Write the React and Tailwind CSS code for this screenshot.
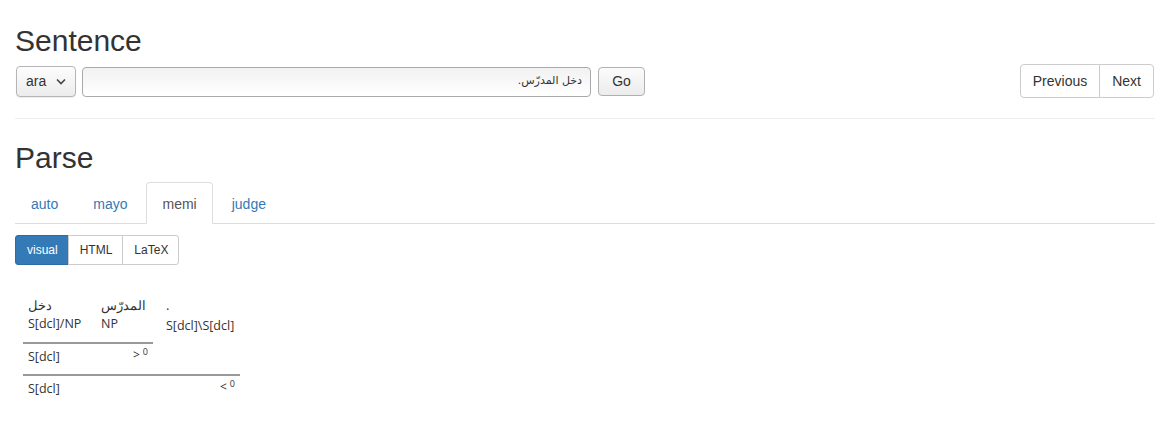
import React from 'react';

const sans = { fontFamily: '"Liberation Sans", Arial, sans-serif' };

const tabs = ['auto', 'mayo', 'memi', 'judge'];
const views = ['visual', 'HTML', 'LaTeX'];

const Derivation = () => (
  <div className="mt-[31px] ml-[8px] text-[12.5px] text-[#333]" style={{ fontFamily: '"Open Sans", "Noto Sans", sans-serif' }}>
    <div className="flex">
      <div className="w-[73px] pl-[5px]">
        <div className="leading-[18px] text-[13px]" dir="rtl" style={{ textAlign: 'left' }}>دخل</div>
        <div className="leading-[18px] pt-[1px]">S[dcl]/NP</div>
      </div>
      <div className="w-[65px] pl-[5px]">
        <div className="leading-[18px] text-[13px]" dir="rtl" style={{ textAlign: 'left' }}>المدرّس</div>
        <div className="leading-[18px] pt-[1px]">NP</div>
      </div>
      <div className="pl-[5px]">
        <div className="leading-[18px] text-[13px]">.</div>
        <div className="leading-[18px] pt-[3px]">S[dcl]\S[dcl]</div>
      </div>
    </div>
    <div className="mt-[7px] w-[130px] h-[2px] bg-[#999]" />
    <div className="flex w-[130px] justify-between pl-[5px] pr-[5px] h-[28px] items-center">
      <span className="-mt-[2px]">S[dcl]</span>
      <span className="text-[12px] -mt-[6px]">&gt;<sup className="ml-[3px] text-[9px]">0</sup></span>
    </div>
    <div className="mt-[2px] w-[217px] h-[2px] bg-[#999]" />
    <div className="flex w-[217px] justify-between pl-[5px] pr-[5px] h-[26px] items-center">
      <span>S[dcl]</span>
      <span className="text-[12px] -mt-[4px]">&lt;<sup className="ml-[3px] text-[9px]">0</sup></span>
    </div>
  </div>
);

export default function App() {
  return (
    <div className="min-h-[425px] bg-white px-[15px] text-[14px] text-[#333]" style={sans}>
      <h2 className="pt-[24px] text-[30px] leading-[33px] font-normal">Sentence</h2>

      <div className="mt-[8px] flex items-center justify-between">
        <div className="flex items-center">
          <div className="ml-[1px] flex h-[31px] w-[60px] items-center justify-between rounded-[4px] border border-[#b5b5b5] bg-gradient-to-b from-[#fdfdfd] to-[#ececec] pl-[9px] pr-[9px] text-[14px] shadow-[0_1px_1px_rgba(0,0,0,0.08)]">
            <span>ara</span>
            <svg width="10" height="7" viewBox="0 0 10 7" fill="none" stroke="#444" strokeWidth="1.6">
              <path d="M1 1.5l4 4 4-4" />
            </svg>
          </div>
          <div className="ml-[6px] flex h-[30px] w-[509px] items-center justify-end rounded-[4px] border border-[#a9a9a9] bg-gradient-to-b from-[#f1f1f1] to-white pr-[8px]">
            <span dir="rtl" style={{ fontFamily: '"DejaVu Sans", sans-serif' }} className="text-[11px]">دخل المدرّس.</span>
          </div>
          <div className="ml-[7px] flex h-[29px] w-[47px] items-center justify-center rounded-[4px] border border-[#b0b0b0] bg-gradient-to-b from-[#fbfbfb] to-[#ececec] text-[14px]">
            Go
          </div>
        </div>
        <div className="mr-[1px] flex h-[34px] -mt-[1px]">
          <div className="flex items-center rounded-l-[4px] border border-[#ccc] bg-white px-[12px]">Previous</div>
          <div className="-ml-px flex items-center rounded-r-[4px] border border-[#ccc] bg-white px-[12px]">Next</div>
        </div>
      </div>

      <div className="mt-[20px] border-t border-[#eee]" />

      <h2 className="pt-[22px] text-[30px] leading-[33px] font-normal">Parse</h2>

      <div className="mt-[8px] flex border-b border-[#ddd]">
        {tabs.map((t) => (
          <div
            key={t}
            className={`-mb-px mr-[3px] px-[15px] pt-[11px] pb-[9px] leading-[20px] ${
              t === 'memi'
                ? 'rounded-t-[4px] border border-[#ddd] border-b-white bg-white text-[#555]'
                : 'border border-transparent text-[#337ab7]'
            }`}
          >
            {t}
          </div>
        ))}
      </div>

      <div className="mt-[11px] flex text-[12px] leading-[18px]">
        {views.map((v, i) => (
          <div
            key={v}
            className={`pl-[11px] pr-[10px] py-[5px] border ${
              v === 'visual'
                ? 'rounded-l-[3px] border-[#2e6da4] bg-[#337ab7] text-white'
                : 'border-[#ccc] bg-white text-[#333]'
            } ${i > 0 ? '-ml-px' : ''} ${i === views.length - 1 ? 'rounded-r-[3px]' : ''}`}
          >
            {v}
          </div>
        ))}
      </div>

      <Derivation />
    </div>
  );
}
